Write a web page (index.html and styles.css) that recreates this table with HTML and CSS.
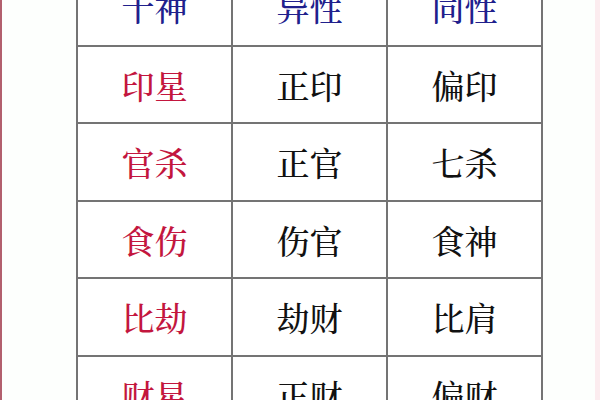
FILE: index.html
```html
<!DOCTYPE html>
<html lang="zh">
<head>
<meta charset="utf-8">
<link rel="stylesheet" href="styles.css">
</head>
<body>
<div class="page">
  <table class="grid">
    <tr class="head"><td>十神</td><td>异性</td><td>同性</td></tr>
    <tr><td class="kind">印星</td><td>正印</td><td>偏印</td></tr>
    <tr><td class="kind">官杀</td><td>正官</td><td>七杀</td></tr>
    <tr><td class="kind">食伤</td><td>伤官</td><td>食神</td></tr>
    <tr><td class="kind">比劫</td><td>劫财</td><td>比肩</td></tr>
    <tr><td class="kind">财星</td><td>正财</td><td>偏财</td></tr>
  </table>
</div>
</body>
</html>
```
FILE: styles.css
```css
html, body {
  margin: 0;
  padding: 0;
  width: 600px;
  height: 400px;
  overflow: hidden;
  background: #ffffff;
}
.page {
  width: 600px;
  height: 400px;
  box-sizing: border-box;
  border-left: 2px solid #b2606e;
  border-right: 5px solid #fcecef;
  background: #fdfffd;
  overflow: hidden;
}
.grid {
  border-collapse: collapse;
  margin-left: 74px;
  margin-top: -33px;
  table-layout: fixed;
  background: #ffffff;
}
.grid td {
  border: 2px solid #747474;
  width: 153px;
  height: 75.5px;
  padding: 0;
  text-align: center;
  vertical-align: middle;
  font-family: "Noto Serif CJK SC", "Noto Sans CJK SC", serif;
  font-size: 33px;
  font-weight: 500;
  color: #111111;
  line-height: 1;
}
.grid .head td {
  color: #20208c;
}
.grid td.kind {
  color: #c3163e;
}
```
